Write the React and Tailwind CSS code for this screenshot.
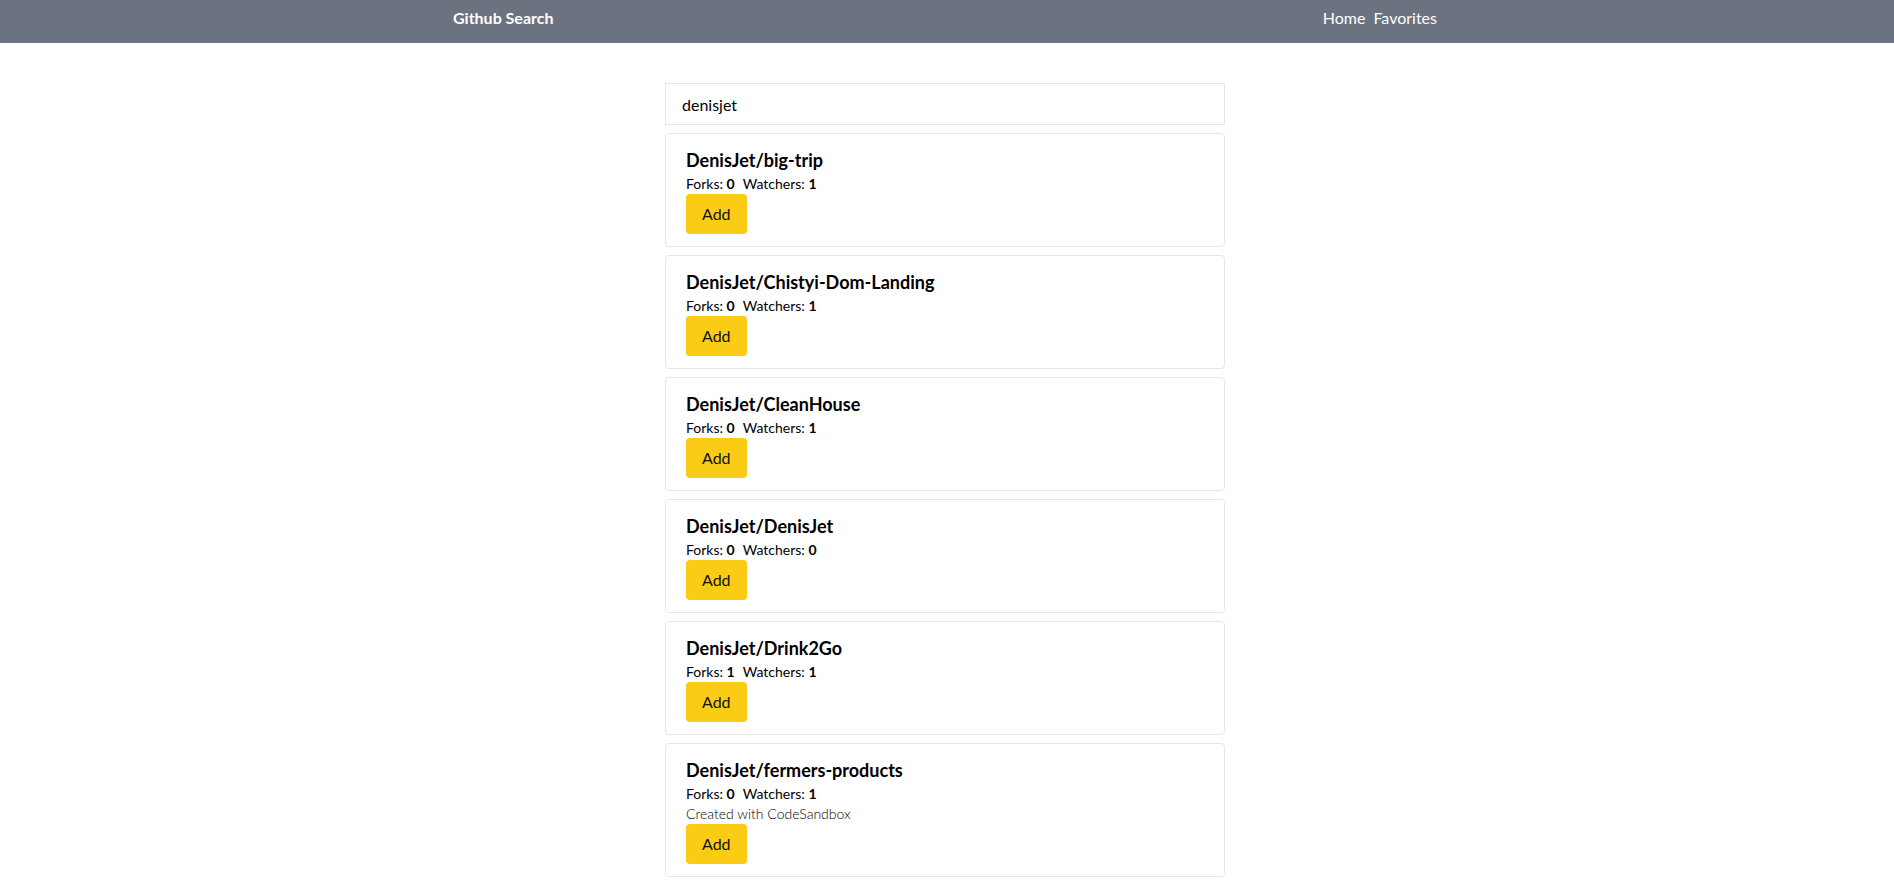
import React from "react";

const repos = [
  { name: "DenisJet/big-trip", forks: 0, watchers: 1 },
  { name: "DenisJet/Chistyi-Dom-Landing", forks: 0, watchers: 1 },
  { name: "DenisJet/CleanHouse", forks: 0, watchers: 1 },
  { name: "DenisJet/DenisJet", forks: 0, watchers: 0 },
  { name: "DenisJet/Drink2Go", forks: 1, watchers: 1 },
  { name: "DenisJet/fermers-products", forks: 0, watchers: 1, description: "Created with CodeSandbox" },
];

function RepoCard({ repo }) {
  return (
    <div className="w-[560px] border border-[#e5e7eb] rounded py-3 px-5">
      <h2 className="text-lg leading-7 font-bold">{repo.name}</h2>
      <p className="text-sm leading-5">
        Forks: <span className="font-bold mr-2">{repo.forks}</span>
        Watchers: <span className="font-bold">{repo.watchers}</span>
      </p>
      {repo.description && <p className="text-sm leading-5 font-light text-black">{repo.description}</p>}
      <button className="py-2 px-4 bg-[#facc15] rounded text-base leading-6 text-[#111]">Add</button>
    </div>
  );
}

export default function App() {
  return (
    <div className="min-h-screen bg-white text-black" style={{ fontFamily: "Lato, 'Noto Sans', sans-serif" }}>
      <nav className="h-[43px] bg-[#6b7280] text-white pr-1">
        <div className="w-[984px] mx-auto flex justify-between items-start pt-[6px]">
          <h3 className="font-bold text-base leading-6">Github Search</h3>
          <span className="flex gap-2 text-base leading-6">
            <a href="#">Home</a>
            <a href="#">Favorites</a>
          </span>
        </div>
      </nav>
      <div className="flex flex-col items-center gap-2 pt-10 pr-1">
        <input
          type="text"
          defaultValue="denisjet"
          className="w-[560px] h-[42px] border border-[#e5e7eb] px-4 text-base outline-none"
        />
        {repos.map((r) => (
          <RepoCard key={r.name} repo={r} />
        ))}
      </div>
    </div>
  );
}
